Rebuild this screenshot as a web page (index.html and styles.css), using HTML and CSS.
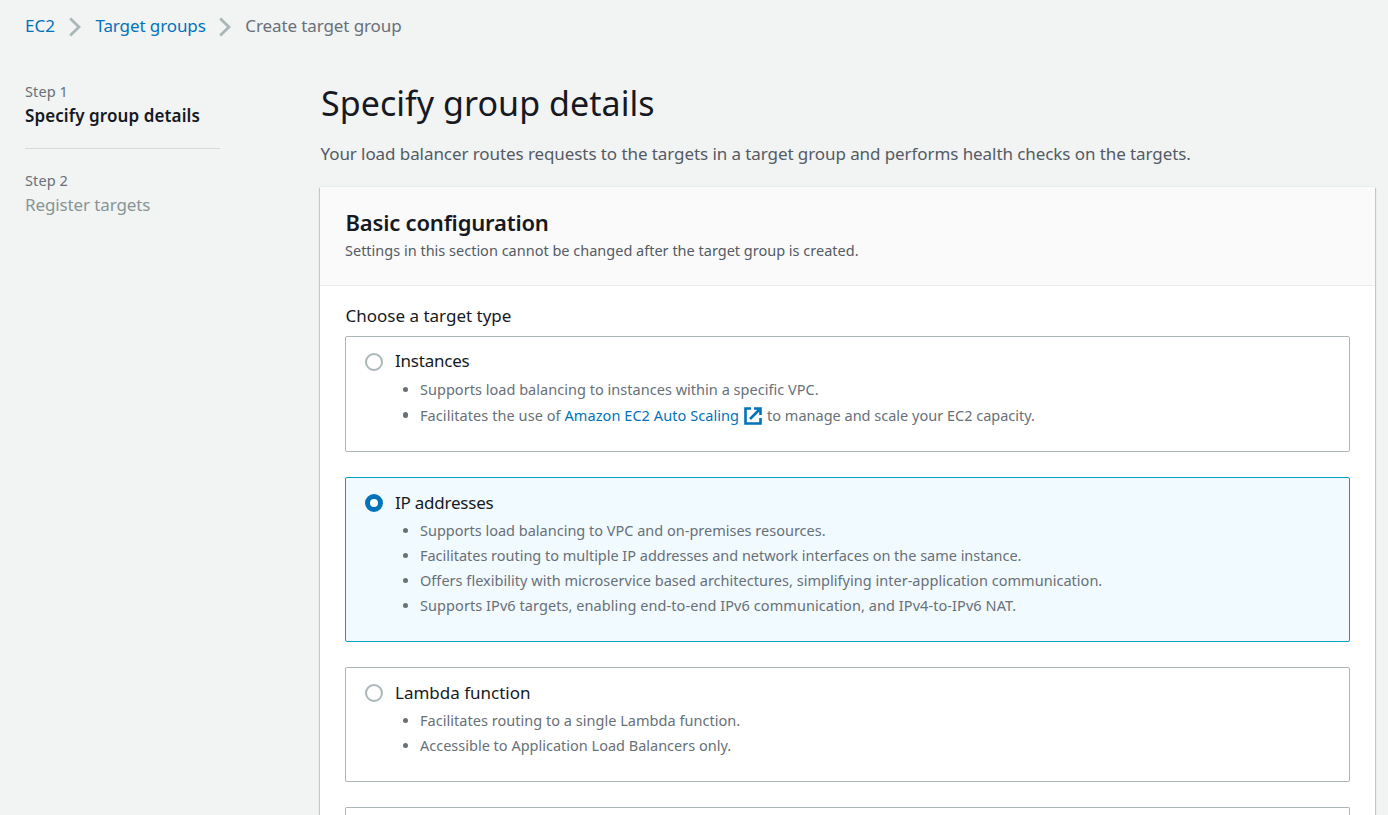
FILE: index.html
```html
<!DOCTYPE html>
<html lang="en">
<head>
<meta charset="utf-8">
<title>Create target group</title>
<link rel="stylesheet" href="styles.css">
</head>
<body>
<nav class="breadcrumbs">
  <a href="#">EC2</a>
  <svg class="chevron" viewBox="0 0 12 20"><path d="M1.2 1.5 L10 10 L1.2 18.5"/></svg>
  <a class="tight" href="#">Target groups</a>
  <svg class="chevron second" viewBox="0 0 12 20"><path d="M1.2 1.5 L10 10 L1.2 18.5"/></svg>
  <span class="tight">Create target group</span>
</nav>
<div class="layout">
  <aside class="steps">
    <div class="step active"><span class="step-number">Step 1</span><span class="step-title">Specify group details</span></div>
    <div class="step"><span class="step-number">Step 2</span><span class="step-title">Register targets</span></div>
  </aside>
  <main class="content">
    <h1>Specify group details</h1>
    <p class="intro">Your load balancer routes requests to the targets in a target group and performs health checks on the targets.</p>
    <section class="card">
      <header class="card-header">
        <h2>Basic configuration</h2>
        <p>Settings in this section cannot be changed after the target group is created.</p>
      </header>
      <div class="card-body">
        <div class="field-label">Choose a target type</div>
        <div class="tiles">
          <div class="tile tile-instances">
            <span class="radio"></span>
            <div class="tile-text">
              <div class="tile-title snug">Instances</div>
              <ul>
                <li class="loose">Supports load balancing to instances within a specific VPC.</li>
                <li class="with-link"><span class="looser">Facilitates the use of <a href="#">Amazon EC2 Auto Scaling</a></span><svg class="external" viewBox="0 0 18 18"><path d="M7 1.5H1.5V16.5H16.5V11M10 1.5H16.5V8M16 2L6 12"/></svg><span>to manage and scale your EC2 capacity.</span></li>
              </ul>
            </div>
          </div>
          <div class="tile selected">
            <span class="radio"></span>
            <div class="tile-text">
              <div class="tile-title snug">IP addresses</div>
              <ul>
                <li>Supports load balancing to VPC and on-premises resources.</li>
                <li class="close">Facilitates routing to multiple IP addresses and network interfaces on the same instance.</li>
                <li class="loose">Offers flexibility with microservice based architectures, simplifying inter-application communication.</li>
                <li class="looser">Supports IPv6 targets, enabling end-to-end IPv6 communication, and IPv4-to-IPv6 NAT.</li>
              </ul>
            </div>
          </div>
          <div class="tile">
            <span class="radio"></span>
            <div class="tile-text">
              <div class="tile-title">Lambda function</div>
              <ul>
                <li class="loose">Facilitates routing to a single Lambda function.</li>
                <li>Accessible to Application Load Balancers only.</li>
              </ul>
            </div>
          </div>
          <div class="tile tile-cut"></div>
        </div>
      </div>
    </section>
  </main>
</div>
</body>
</html>
```
FILE: styles.css
```css
* { box-sizing: border-box; }
body {
  margin: 0;
  height: 815px;
  overflow: hidden;
  background: #f2f3f3;
  color: #16191f;
  font-family: "Noto Sans", sans-serif;
  font-size: 17px;
}
h1, h2, p, ul { margin: 0; padding: 0; }
a { color: #0073bb; text-decoration: none; }
.tight { letter-spacing: -0.1px; }
.snug { letter-spacing: -0.23px; }
.close { letter-spacing: -0.02px; }
.loose { letter-spacing: 0.027px; }
.looser { letter-spacing: 0.07px; }
.breadcrumbs { display: flex; align-items: center; height: 52px; padding: 0 0 1px 25px; color: #687078; }
.chevron { width: 12px; height: 20px; margin: 3px 14.5px 0 14px; fill: none; stroke: #aab7b8; stroke-width: 2.8; }
.second { margin-left: 13px; }
.layout { display: flex; height: 763px; }
.steps { width: 195px; margin-left: 25px; padding-top: 27px; flex: none; }
.step { display: flex; flex-direction: column; line-height: 24px; color: #879596; white-space: nowrap; }
.step-number { height: 25px; font-size: 14.5px; letter-spacing: 0.1px; color: #687078; }
.step-title { letter-spacing: -0.12px; }
.active { padding-bottom: 20px; border-bottom: 1px solid #d5dbdb; margin-bottom: 19px; }
.active .step-title { font-weight: 600; letter-spacing: 0.1px; color: #16191f; }
.content { width: 1055px; margin-left: 100px; flex: none; white-space: nowrap; }
h1 { font-size: 34px; font-weight: 400; line-height: 46px; letter-spacing: 0.05px; padding: 28px 0 0 1px; height: 88px; }
.intro { line-height: 28px; letter-spacing: -0.08px; padding-left: 0.5px; color: #545b64; height: 47px; }
.card { height: 628px; background: #fff; box-shadow: 0 -1px 0 #eaeded, 1px 1px 1px rgba(0,28,36,.2), -1px 1px 1px rgba(0,28,36,.2); }
.card-header { height: 99px; padding: 21px 25px 0; background: #fafafa; border-bottom: 1px solid #eaeded; }
h2 { font-size: 22px; font-weight: 600; line-height: 28px; letter-spacing: -0.19px; padding-left: 0.5px; }
.card-header p { font-size: 14.5px; line-height: 28px; color: #545b64; }
.card-body { padding: 16px 25px 0; }
.field-label { line-height: 28px; height: 34px; padding-left: 0.5px; }
.tiles { display: flex; flex-direction: column; gap: 25px; }
.tile { display: flex; height: 115px; padding: 11px 19px; border: 1px solid #aab7b8; border-radius: 2px; background: #fff; }
.tile-instances { height: 116px; }
.tile-instances .tile-title { margin-top: -1px; margin-bottom: 1px; }
.tile-cut { height: 8px; padding: 0; border-bottom: 0; border-radius: 2px 2px 0 0; }
.selected { height: 165px; background: #f1faff; border-color: #00a1c9; }
.radio { width: 18px; height: 18px; margin: 5px 12px 0 0; border: 2px solid #aab7b8; border-radius: 50%; background: #fff; flex: none; }
.selected .radio { border: 5px solid #0073bb; }
.tile-title { line-height: 28px; }
ul { list-style: none; padding-top: 1px; font-size: 14.5px; line-height: 25px; color: #687078; }
li { display: flex; align-items: center; height: 25px; }
li::before { content: ""; width: 5.5px; height: 5.5px; margin: 0 12px 0 7.5px; border-radius: 50%; background: #687078; flex: none; }
.with-link { height: 26px; }
.external { width: 18px; height: 18px; margin: 1px 5px 0; fill: none; stroke: #0073bb; stroke-width: 2.6; }
```
